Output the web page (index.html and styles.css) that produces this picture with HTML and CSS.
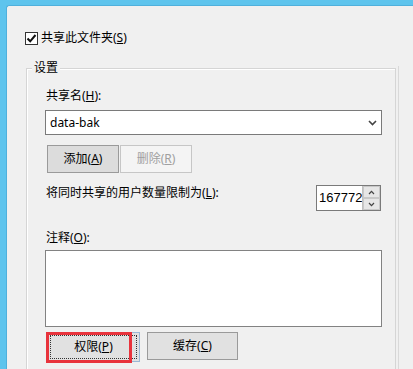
FILE: index.html
```html
<!DOCTYPE html>
<html>
<head>
<meta charset="utf-8">
<link rel="stylesheet" href="styles.css">
</head>
<body>
<div class="window">
  <div class="check-row">
    <span class="checkbox">
      <svg width="11" height="11" viewBox="0 0 11 11"><path d="M1.5 5.5 L4.2 8.3 L9.5 2" fill="none" stroke="#111" stroke-width="2"/></svg>
    </span>
    <span class="label">共享此文件夹(<u>S</u>)</span>
  </div>
  <div class="group-wrap">
    <div class="group">
      <span class="legend">设置</span>
      <div class="label name-label">共享名(<u>H</u>):</div>
      <div class="combo">
        <span class="combo-text">data-bak</span>
        <svg class="chev" width="9" height="6" viewBox="0 0 9 6"><path d="M1 1 L4.5 4.5 L8 1" fill="none" stroke="#444" stroke-width="1.6"/></svg>
      </div>
      <div class="btn-row">
        <div class="btn btn-add">添加(<u>A</u>)</div>
        <div class="btn btn-disabled">删除(<u>R</u>)</div>
      </div>
      <div class="limit-row">
        <span class="label">将同时共享的用户数量限制为(<u>L</u>):</span>
        <div class="spin">
          <span class="spin-text">167772</span>
          <div class="spin-btns">
            <div class="spin-btn"><svg width="7" height="5" viewBox="0 0 7 5"><path d="M1 4 L3.5 1.3 L6 4" fill="none" stroke="#444" stroke-width="1.2"/></svg></div>
            <div class="spin-btn"><svg width="7" height="5" viewBox="0 0 7 5"><path d="M1 1 L3.5 3.7 L6 1" fill="none" stroke="#444" stroke-width="1.2"/></svg></div>
          </div>
        </div>
      </div>
      <div class="label note-label">注释(<u>O</u>):</div>
      <div class="textarea"></div>
      <div class="btn-row bottom-row">
        <div class="btn btn-perm"><span class="focus">权限(<u>P</u>)</span><span class="highlight"></span></div>
        <div class="btn btn-cache">缓存(<u>C</u>)</div>
      </div>
    </div>
  </div>
</div>
</body>
</html>
```
FILE: styles.css
```css
html, body {
  margin: 0;
  padding: 0;
}
body {
  background: #5ec4ed;
  width: 413px;
  height: 369px;
  overflow: hidden;
  font-family: "Noto Sans", "Noto Sans CJK SC", sans-serif;
  font-size: 12px;
  color: #000;
}
.window {
  margin-top: 5px;
  margin-left: 6px;
  height: 364px;
  background: #f0f0f0;
  border-top: 1px solid #4fb0dc;
  border-left: 1px solid #4fb0dc;
  border-top-left-radius: 3px;
  box-sizing: border-box;
  overflow: hidden;
}
.label {
  line-height: 16px;
  height: 16px;
  white-space: nowrap;
}
u {
  text-decoration: underline;
  text-underline-offset: 1px;
}
.check-row {
  display: flex;
  align-items: center;
  height: 16px;
  margin-top: 24px;
  margin-left: 18px;
  gap: 3px;
}
.checkbox {
  width: 11px;
  height: 11px;
  border: 1px solid #333;
  background: #fff;
  display: flex;
  align-items: center;
  justify-content: center;
}
.group-wrap {
  margin-top: 20px;
  margin-left: 19px;
  width: 373px;
  border-right: 1px solid #d9d9d9;
  padding-top: 2px;
  height: 320px;
  box-sizing: border-box;
}
.group {
  position: relative;
  width: 370px;
  height: 330px;
  border: 1px solid #d5d5d5;
  box-shadow: inset 1px 1px 0 #fff;
  box-sizing: border-box;
  padding: 19px 12px 0 18px;
}
.legend {
  position: absolute;
  top: -9px;
  left: 5px;
  padding: 0 2px;
  line-height: 16px;
  background: #f0f0f0;
}
.combo {
  margin-top: 6px;
  height: 25px;
  width: 337px;
  box-sizing: border-box;
  border: 1px solid #7a7a7a;
  background: #fff;
  display: flex;
  align-items: center;
  justify-content: space-between;
  padding: 0 4px 0 4px;
}
.combo-text {
  font-size: 12px;
  line-height: 16px;
}
.chev {
  margin-top: 1px;
}
.btn-row {
  display: flex;
  margin-top: 10px;
  gap: 1px;
  margin-left: 2px;
}
.btn {
  height: 28px;
  box-sizing: border-box;
  display: flex;
  align-items: center;
  justify-content: center;
  line-height: 16px;
}
.btn-add {
  width: 72px;
  background: #dcdcdc;
  border: 1px solid #9a9a9a;
}
.btn-disabled {
  width: 72px;
  background: #f4f4f4;
  border: 1px solid #c6c6c6;
  color: #a0a0a0;
}
.limit-row {
  margin-top: 12px;
  display: flex;
  justify-content: space-between;
  align-items: flex-start;
  padding-left: 1px;
  padding-right: 2px;
}
.spin {
  width: 65px;
  height: 26px;
  box-sizing: border-box;
  border: 1px solid #7a7a7a;
  background: #fff;
  display: flex;
}
.spin-text {
  flex: 1;
  font-family: "Liberation Sans", sans-serif;
  font-size: 13px;
  line-height: 24px;
  padding-left: 2px;
}
.spin-btns {
  width: 17px;
  display: flex;
  flex-direction: column;
  border-left: 1px solid #c0c0c0;
}
.spin-btn {
  flex: 1;
  background: #e6e6e6;
  border: 1px solid #c8c8c8;
  display: flex;
  align-items: center;
  justify-content: center;
}
.note-label {
  margin-top: 19px;
  padding-left: 1px;
}
.name-label {
  padding-left: 1px;
}
.textarea {
  margin-top: 4px;
  width: 337px;
  height: 77px;
  box-sizing: border-box;
  border: 1px solid #828282;
  background: #fff;
}
.bottom-row {
  margin-top: 5px;
  gap: 7px;
}
.btn-perm {
  position: relative;
  width: 93px;
  height: 30px;
  background: #e1e1e1;
  border: 1px solid #9ab8d6;
  padding: 2px;
}
.focus {
  flex: 1;
  align-self: stretch;
  display: flex;
  align-items: center;
  justify-content: center;
  border: 1px dotted #333;
}
.highlight {
  position: absolute;
  left: -2px;
  top: -1px;
  width: 86px;
  height: 31px;
  box-sizing: border-box;
  border: 3px solid #e8333c;
}
.btn-cache {
  width: 91px;
  height: 28px;
  background: #e1e1e1;
  border: 1px solid #9a9a9a;
}
```
